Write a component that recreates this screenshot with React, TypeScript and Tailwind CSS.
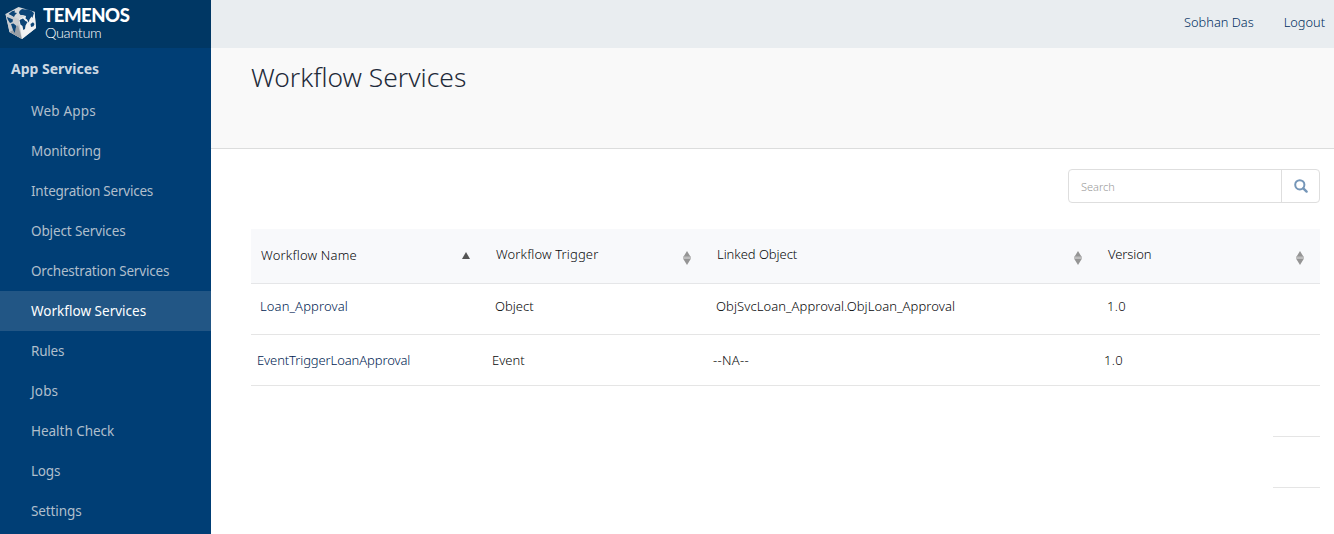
const navItems: [string, string][] = [
  ["Web Apps", "tracking-[0.18px]"],
  ["Monitoring", "tracking-[-0.1px]"],
  ["Integration Services", "tracking-[-0.22px]"],
  ["Object Services", "tracking-[-0.12px]"],
  ["Orchestration Services", "tracking-[-0.19px]"],
  ["Workflow Services", "tracking-[0.02px]"],
  ["Rules", "tracking-[-0.2px]"],
  ["Jobs", "tracking-[0.15px]"],
  ["Health Check", "tracking-[-0.03px]"],
  ["Logs", "tracking-[-0.2px]"],
  ["Settings", "tracking-[-0.1px]"],
];

function Cube() {
  return (
    <svg width="32" height="34" viewBox="0 0 32 34" className="shrink-0">
      <path d="M0.5 8 L13.5 1 L29.5 5.8 L31 22 L17 33 L4.5 26 Z" fill="#d5d9dc" />
      <path d="M0.5 8 L14 13 L17 33 L4.5 26 Z" fill="#c9cccf" />
      <path d="M10 23 L13 19 L17 33 L4.5 26 Z" fill="#999fa5" />
      <path d="M14 13 L29.5 5.8 L31 22 L17 33 Z" fill="#f1f2f3" />
      <path d="M3.5 8 L7 5.2 L10 4.6 L9.5 6.5 L12 7 L10 9 L9 11 L6.5 9.6 Z" fill="#0c4577" />
      <path d="M14.5 5 L17 3 L20 3.5 L23 3.3 L27 5.2 L29 7 L28 10 L27.4 12 L26.5 10.5 L24.5 13.5 L23.8 16.5 L22 13.5 L20.5 12.5 L21 10 L18 9 L15.5 9 L14 7 Z" fill="#0c4577" />
      <path d="M1.8 11 L4.5 12 L8 13.5 L7.5 16 L5 17 L3 14 Z" fill="#0c4577" />
      <path d="M6 18 L8.5 17.5 L11.5 20 L10.5 23 L9.8 27 L8 24 Z" fill="#0c4577" />
      <path d="M14.5 14 L18 12.5 L20.5 15 L22.5 16 L20.5 19.5 L20 23 L18.3 24 L17.5 20 L15.5 18.5 Z" fill="#0c4577" />
      <path d="M25.5 18 L28 16.2 L29.5 18 L28.5 20.3 L26 21 Z" fill="#0c4577" />
    </svg>
  );
}

function SearchIcon() {
  return (
    <svg width="14" height="14" viewBox="0 0 14 14" fill="none" stroke="#7596b8">
      <circle cx="5.8" cy="5.8" r="4.6" strokeWidth="2" />
      <path d="M9.3 9.3 L12.6 12.6" strokeWidth="2.4" strokeLinecap="round" />
    </svg>
  );
}

function SortBoth() {
  return (
    <svg width="8" height="14" viewBox="0 0 8 14">
      <path d="M4 0 L8 6.5 H0 Z M4 14 L8 7.5 H0 Z" fill="#959595" />
      <path d="M0 5.5 H8 V8 H0 Z" fill="#bdbdbd" />
    </svg>
  );
}

const columns: [string, string][] = [
  ["Workflow Trigger", "tracking-[0.13px]"],
  ["Linked Object", "tracking-[-0.05px]"],
  ["Version", "tracking-[-0.1px]"],
];

function Header() {
  return (
    <div className="grid h-[55px] grid-cols-[235px_221px_391px_222px] border-b border-[#e5e6e8] bg-[#f8f9fb]">
      <div className="flex justify-between pt-[17px] pr-4 pl-2.5">
        <span className="tracking-[0.2px]">Workflow Name</span>
        <svg width="8" height="7" viewBox="0 0 8 7" className="mt-[6px]">
          <path d="M4 0 L8 7 H0 Z" fill="#555" />
        </svg>
      </div>
      {columns.map(([label, tracking]) => (
        <div key={label} className="flex justify-between pt-4 pr-4 pl-2.5">
          <span className={tracking}>{label}</span>
          <span className="mt-[6px]"><SortBoth /></span>
        </div>
      ))}
    </div>
  );
}

export default function App() {
  return (
    <div className="flex h-[534px] w-[1334px] overflow-hidden bg-white font-['Noto_Sans','Open_Sans',sans-serif]">
      <aside className="flex w-[211px] shrink-0 flex-col bg-[#003e75]">
        <div className="flex h-12 shrink-0 bg-[#003764] pt-[6px] pl-[5px]">
          <Cube />
          <div className="ml-[6px] font-['Lato',sans-serif] text-white">
            <div className="text-[18.5px] leading-[19px] font-black tracking-[-0.45px]">TEMENOS</div>
            <div className="pl-[2px] text-[14.5px] leading-[16px] font-light tracking-[-0.35px]">Quantum</div>
          </div>
        </div>
        <div className="h-[43px] shrink-0 pt-[11px] pl-[11px] text-[14px] leading-5 font-bold text-[#ccd8e3]">
          App Services
        </div>
        <nav className="text-[13.5px] leading-5">
          {navItems.map(([label, tracking]) => (
            <div
              key={label}
              className={`flex h-10 items-center pl-[31px] ${
                label === "Workflow Services" ? "bg-[#225685] text-white" : "text-[#b0bfcc]"
              }`}
            >
              <span className={tracking}>{label}</span>
            </div>
          ))}
        </nav>
      </aside>
      <main className="w-[1123px] shrink-0">
        <div className="flex h-12 justify-end gap-[30px] bg-[#e9edf0] pt-[12px] pr-[9px] text-[12.8px] leading-5 font-light text-[#002d60]">
          <span>Sobhan Das</span>
          <span>Logout</span>
        </div>
        <div className="h-[101px] border-b border-[#dcdddd] bg-[#f9f9f9] pt-[13px] pl-10">
          <h1 className="text-[26.4px] leading-8 font-light text-[#1f2b3a]">Workflow Services</h1>
        </div>
        <div className="flex justify-end pt-5 pr-[14px]">
          <div className="flex h-[34px] w-[252px] rounded-[4px] border border-[#dedede]">
            <div className="w-[213px] border-r border-[#dedede] pl-[12px] text-[11px] leading-[34px] font-light text-[#999]">Search</div>
            <div className="flex flex-1 items-center justify-center pb-[1px]">
              <SearchIcon />
            </div>
          </div>
        </div>
        <div className="mt-[26px] ml-10 w-[1069px] text-[13px] leading-[18px] font-light text-[#08090b]">
          <Header />
          <div className="grid h-[51px] grid-cols-[235px_221px_391px_222px] border-b border-[#e5e5e5] pt-[13px] pl-[9px]">
            <span className="tracking-[0.12px] text-[#002452]">Loan_Approval</span>
            <span>Object</span>
            <span className="tracking-[0.08px]">ObjSvcLoan_Approval.ObjLoan_Approval</span>
            <span className="tracking-[0.3px]">1.0</span>
          </div>
          <div className="grid h-[51px] grid-cols-[235px_221px_391px_222px] border-b border-[#e5e5e5] pt-[16px] pl-[6px]">
            <span className="tracking-[-0.11px] text-[#002452]">EventTriggerLoanApproval</span>
            <span>Event</span>
            <span className="tracking-[0.3px]">--NA--</span>
            <span className="tracking-[0.3px]">1.0</span>
          </div>
          <div className="ml-auto h-[51px] w-[47px] border-b border-[#e5e5e5]" />
          <div className="ml-auto h-[51px] w-[47px] border-b border-[#e5e5e5]" />
        </div>
      </main>
    </div>
  );
}
